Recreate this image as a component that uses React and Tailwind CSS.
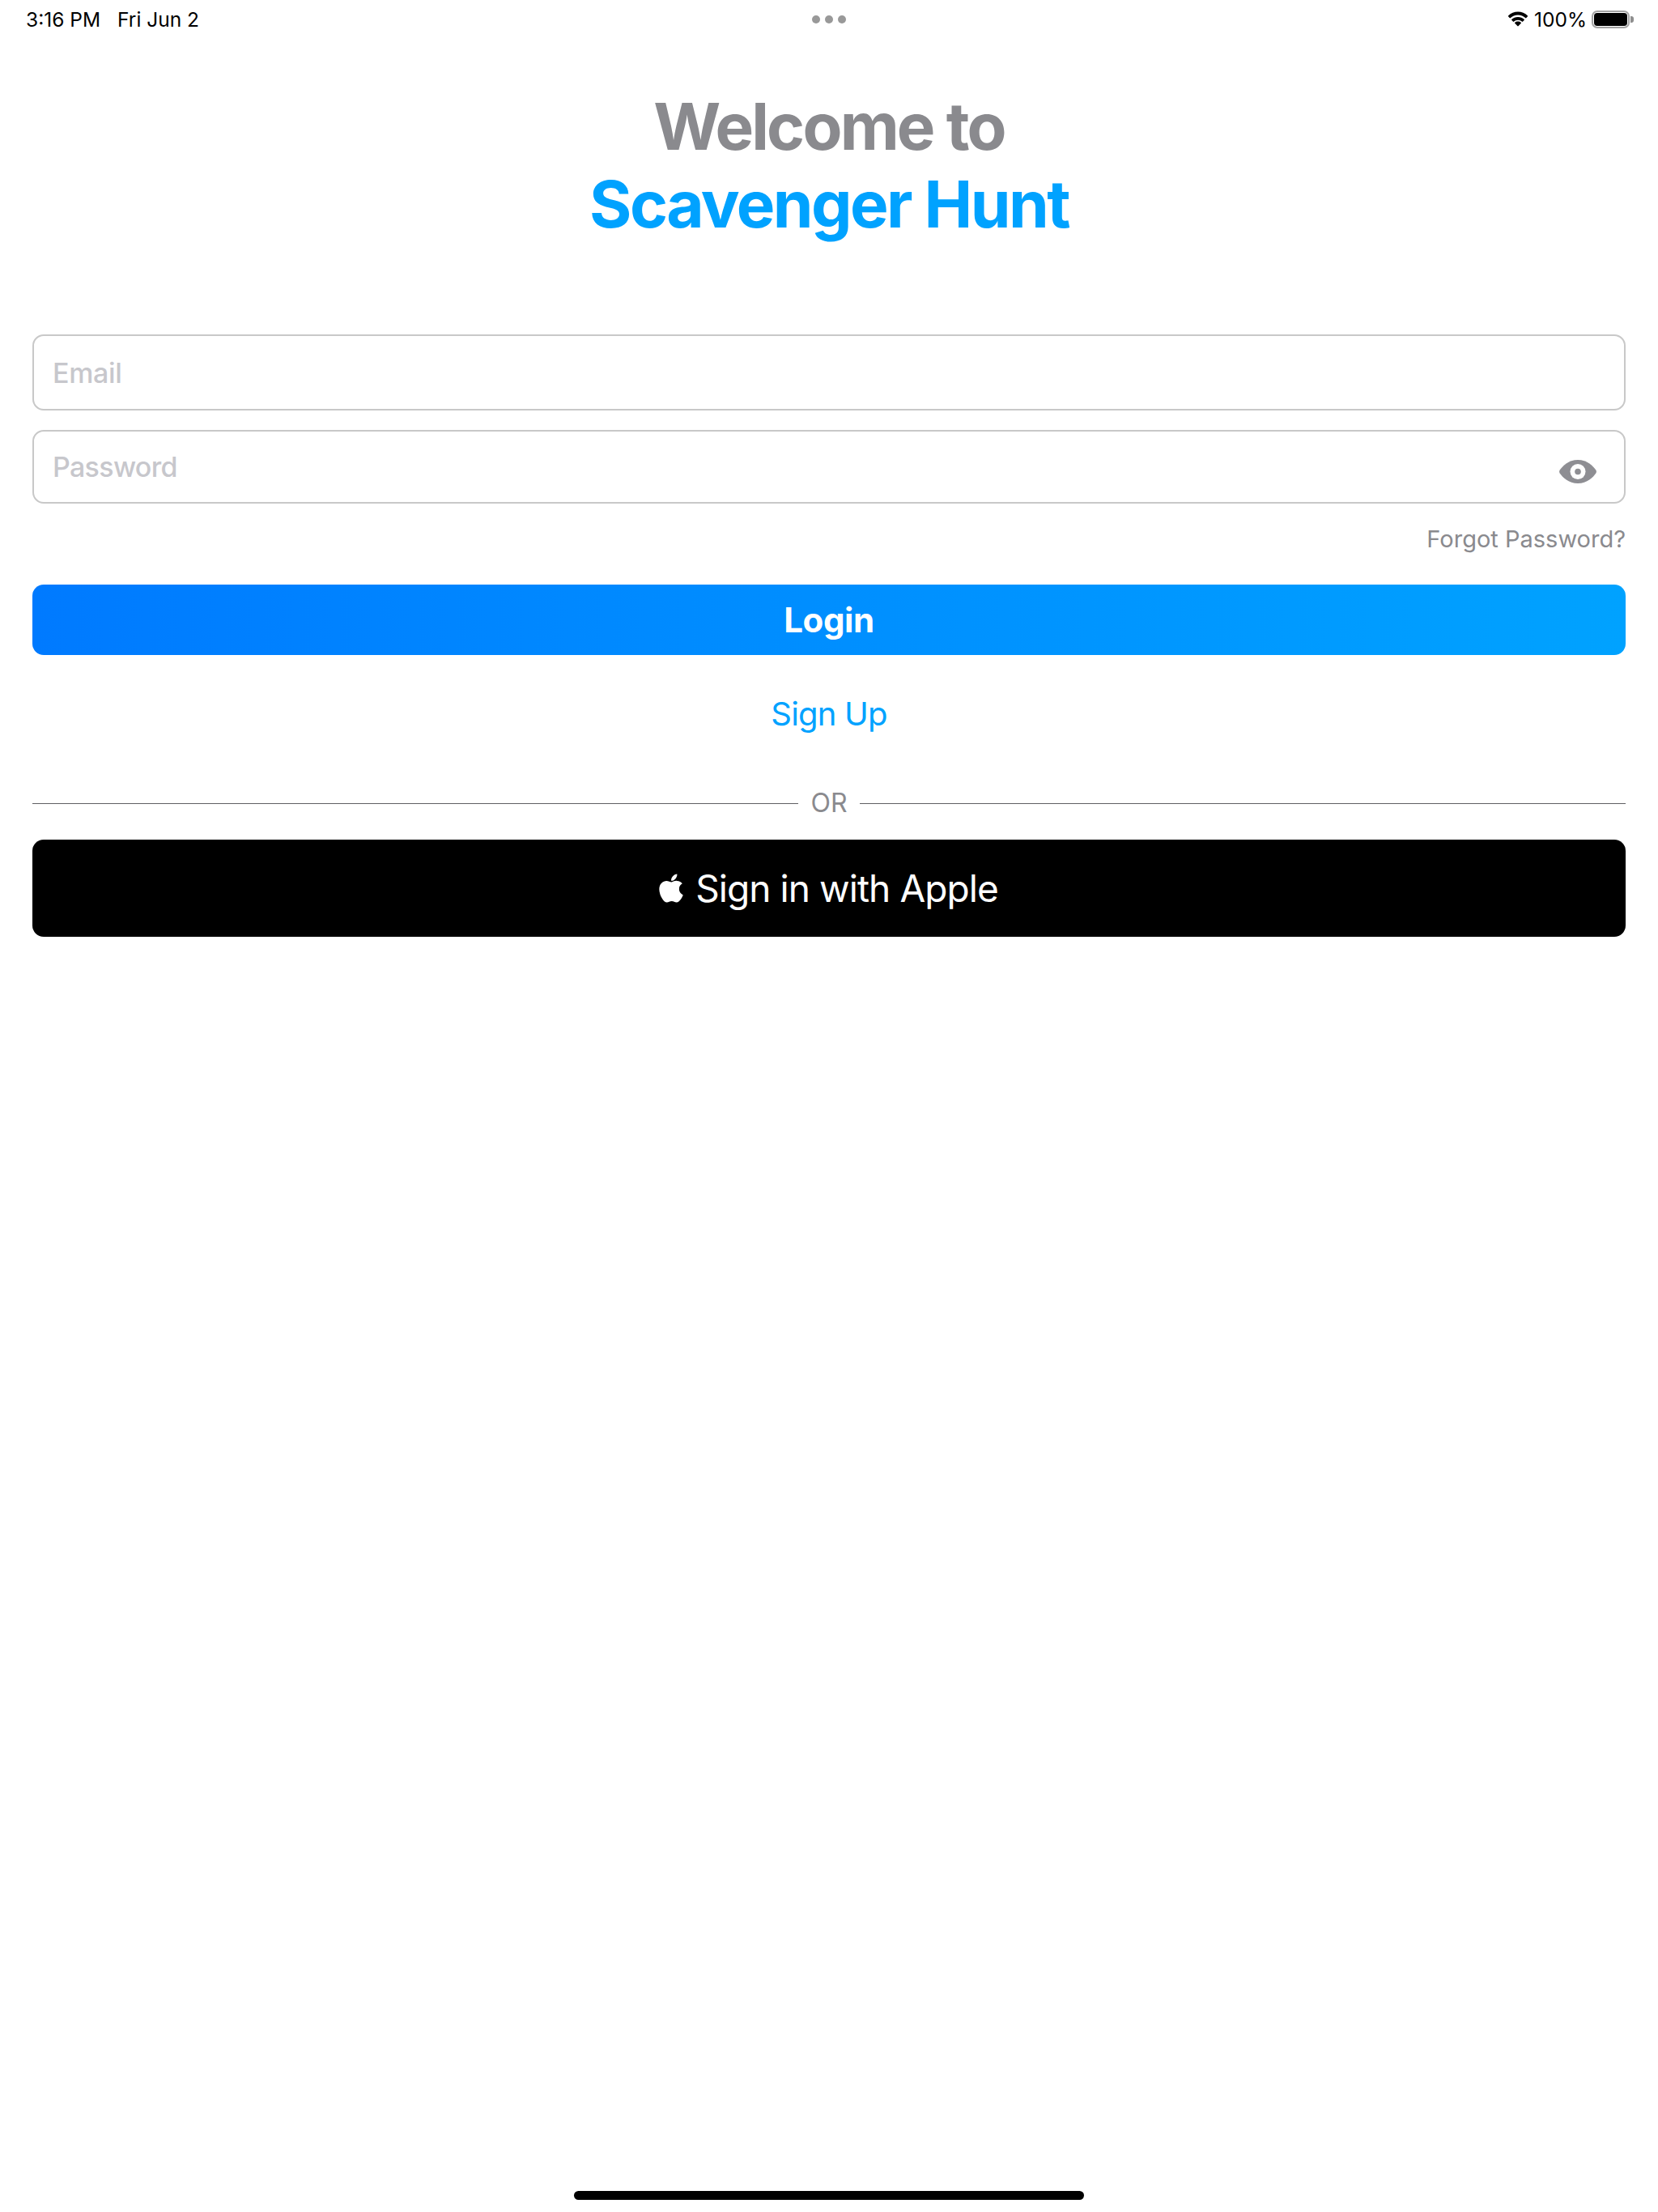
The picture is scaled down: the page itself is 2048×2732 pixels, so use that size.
import { FaApple } from 'react-icons/fa'

function WifiIcon() {
    return (
        <svg width="28" height="20" viewBox="0 0 27 20" fill="#000">
            <path d="M13.500 4.600c3.600 0 6.900 1.400 9.400 3.700.2.200.5.200.7 0l1.900-2c.2-.2.2-.6 0-.8C22.300 2.400 18.100.6 13.500.6S4.700 2.400 1.500 5.500c-.2.200-.2.600 0 .8l1.900 2c.2.200.5.200.7 0 2.500-2.300 5.800-3.700 9.400-3.700z" />
            <path d="M13.500 10.800c2 0 3.800.7 5.200 2 .2.200.5.200.7 0l1.900-2c.2-.2.2-.6 0-.8-2.100-1.900-4.800-3.100-7.800-3.100s-5.700 1.200-7.800 3.100c-.2.200-.2.600 0 .8l1.900 2c.2.200.5.200.7 0 1.400-1.300 3.200-2 5.200-2z" />
            <path d="M17.300 14.800c.2-.2.200-.6 0-.8-1-.9-2.300-1.400-3.800-1.400s-2.800.5-3.800 1.400c-.2.200-.2.600 0 .8l3.400 3.500c.2.200.6.200.8 0l3.400-3.500z" />
        </svg>
    )
}

function Battery() {
    return (
        <div className="flex items-center gap-[1px]">
            <div className="w-[47px] h-[22px] rounded-[7px] border-2 border-[#a3a3a3] p-[1px]">
                <div className="w-full h-full rounded-[4px] bg-black" />
            </div>
            <div className="w-[4px] h-[8px] rounded-r-[3px] bg-[#8e8e8e]" />
        </div>
    )
}

function EyeIcon() {
    return (
        <svg width="46" height="29" viewBox="0 0 46 29" className="block">
            <path d="M23 0C11.500 0 3.800 8 .7 12.600c-.8 1.200-.8 2.600 0 3.800C3.800 21 11.500 29 23 29s19.200-8 22.300-12.600c.8-1.200.8-2.600 0-3.800C42.200 8 34.500 0 23 0z" fill="#8e8e93" />
            <circle cx="23" cy="14.500" r="9.500" fill="#fff" />
            <circle cx="23" cy="14.500" r="3.800" fill="#8e8e93" />
        </svg>
    )
}

export default function App() {
    return (
        <div className="h-[2732px] flex flex-col bg-white font-['Inter','Liberation_Sans',sans-serif]">
            {/* status bar */}
            <div className="h-[48px] px-[30px] flex items-center justify-between text-[24.5px] text-black">
                <div className="w-[400px] pl-[2px] flex gap-[21px]">
                    <span>3:16 PM</span>
                    <span>Fri Jun 2</span>
                </div>
                <div className="flex gap-[6px]">
                    <div className="w-[10px] h-[10px] rounded-full bg-[#999999]" />
                    <div className="w-[10px] h-[10px] rounded-full bg-[#999999]" />
                    <div className="w-[10px] h-[10px] rounded-full bg-[#999999]" />
                </div>
                <div className="w-[400px] flex items-center justify-end gap-[6px]">
                    <WifiIcon />
                    <span>100%</span>
                    <Battery />
                </div>
            </div>

            <div className="flex-1 px-[40px]">
                <div className="pt-[60px] text-center text-[80px] leading-[96px] font-bold">
                    <h1 className="text-[#8a8a8e] tracking-[-0.035em]">Welcome to</h1>
                    <h1 className="text-[#00a2ff] tracking-[-0.032em]">Scavenger Hunt</h1>
                </div>

                <div className="mt-[113px] h-[94px] px-[23px] flex items-center border-2 border-[#c8c8c8] rounded-[14px]">
                    <span className="text-[34px] font-medium tracking-[-0.01em] text-[#c7c7cc]">Email</span>
                </div>

                <div className="mt-[24px] h-[91px] px-[23px] flex items-center justify-between border-2 border-[#c8c8c8] rounded-[14px]">
                    <span className="text-[34px] font-medium tracking-[-0.02em] text-[#c7c7cc]">Password</span>
                    <div className="mr-[11px] mt-[12px]">
                        <EyeIcon />
                    </div>
                </div>

                <div className="mt-[26px] text-right text-[29px] leading-[36px] text-[#8a8a8e]">Forgot Password?</div>

                <button className="mt-[38px] w-full h-[87px] rounded-[14px] bg-gradient-to-r from-[#007aff] to-[#00a2ff] text-white text-[42px] font-bold tracking-[-0.01em]">
                    Login
                </button>

                <div className="mt-[49px] text-center text-[40px] leading-[48px] tracking-[-0.02em] text-[#00a2ff]">Sign Up</div>

                <div className="mt-[68px] flex items-center gap-[15px]">
                    <div className="flex-1 h-[1px] bg-[#5f5f63]" />
                    <span className="text-[32px] leading-[36px] text-[#8a8a8e]">OR</span>
                    <div className="flex-1 h-[1px] bg-[#5f5f63]" />
                </div>

                <button className="mt-[27px] w-full h-[120px] pr-[4px] rounded-[14px] bg-black text-white text-[46px] tracking-[-0.02em] flex items-center justify-center gap-[12px]">
                    <FaApple className="w-[36px] h-[40px]" />
                    <span>Sign in with Apple</span>
                </button>
            </div>

            <div className="pb-[15px] flex justify-center">
                <div className="w-[630px] h-[11px] rounded-full bg-black" />
            </div>
        </div>
    )
}
